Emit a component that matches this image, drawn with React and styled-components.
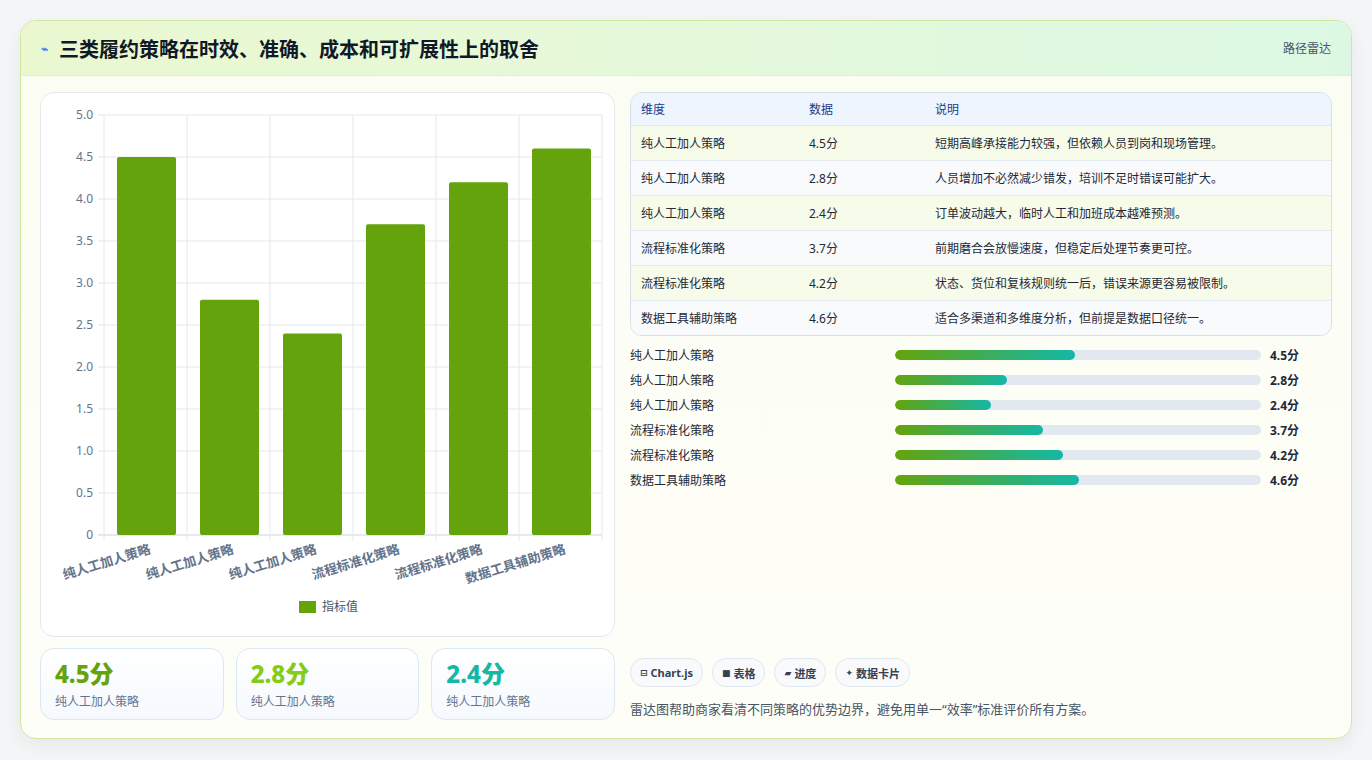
import React from 'react';
import styled, { createGlobalStyle } from 'styled-components';

const GlobalStyle = createGlobalStyle`
  body {
    margin: 0;
    background: #f4f5f7;
    font-family: "Noto Sans", "Noto Sans CJK SC", sans-serif;
  }
`;

const rows = [
  { name: '纯人工加人策略', value: 4.5, note: '短期高峰承接能力较强，但依赖人员到岗和现场管理。' },
  { name: '纯人工加人策略', value: 2.8, note: '人员增加不必然减少错发，培训不足时错误可能扩大。' },
  { name: '纯人工加人策略', value: 2.4, note: '订单波动越大，临时人工和加班成本越难预测。' },
  { name: '流程标准化策略', value: 3.7, note: '前期磨合会放慢速度，但稳定后处理节奏更可控。' },
  { name: '流程标准化策略', value: 4.2, note: '状态、货位和复核规则统一后，错误来源更容易被限制。' },
  { name: '数据工具辅助策略', value: 4.6, note: '适合多渠道和多维度分析，但前提是数据口径统一。' },
];

const Page = styled.div`
  padding: 20px;
`;

const Card = styled.div`
  border: 1px solid #cfe8a0;
  border-radius: 16px;
  background: linear-gradient(180deg, #fbfdf2 0%, #fefef8 100%);
  box-shadow: 0 6px 18px rgba(0, 0, 0, 0.06);
  overflow: hidden;
`;

const Header = styled.div`
  height: 54px;
  padding: 0 20px;
  display: flex;
  align-items: center;
  justify-content: space-between;
  background: linear-gradient(90deg, #eaf8d0 0%, #e4f9dc 60%, #dcf8e4 100%);
  border-bottom: 1px solid #e2ecd6;
`;

const Title = styled.h1`
  margin: 0;
  font-size: 20px;
  font-weight: 700;
  color: #111827;
  display: flex;
  align-items: center;
  gap: 11px;
`;

const Bolt = styled.span`
  font-size: 12px;
  color: #3b82f6;
`;

const HeaderTag = styled.span`
  font-size: 12px;
  color: #475569;
`;

const Body = styled.div`
  display: grid;
  grid-template-columns: 575px 1fr;
  gap: 15px;
  padding: 16px 19px 18px 19px;
`;

const LeftCol = styled.div`
  display: flex;
  flex-direction: column;
  gap: 11px;
`;

const ChartCard = styled.div`
  height: 543px;
  background: #fff;
  border: 1px solid #e2e8f0;
  border-radius: 14px;
`;

const Stats = styled.div`
  display: grid;
  grid-template-columns: repeat(3, 1fr);
  gap: 12px;
`;

const Stat = styled.div`
  height: 72px;
  box-sizing: border-box;
  padding: 10px 14px;
  border: 1px solid #dbe7f3;
  border-radius: 14px;
  background: linear-gradient(180deg, #ffffff, #f5f9fe);
`;

const StatValue = styled.div`
  font-size: 24px;
  font-weight: 800;
  line-height: 30px;
  color: ${p => p.$color};
`;

const StatLabel = styled.div`
  font-size: 12px;
  color: #64748b;
  margin-top: 3px;
`;

const RightCol = styled.div`
  display: flex;
  flex-direction: column;
`;

const Table = styled.div`
  border: 1px solid #d6dee8;
  border-radius: 12px;
  overflow: hidden;
  background: #fff;
  font-size: 12px;
`;

const TRow = styled.div`
  display: grid;
  grid-template-columns: 168px 126px 1fr;
  height: ${p => (p.$head ? '32px' : '34px')};
  align-items: center;
  padding-left: 10px;
  background: ${p => (p.$head ? '#eef5fe' : p.$odd ? '#f6fbea' : '#f8fafc')};
  color: ${p => (p.$head ? '#1e3a8a' : '#1f2937')};
  border-top: ${p => (p.$head ? 'none' : '1px solid #e2e8f0')};
`;

const Bars = styled.div`
  margin-top: 10px;
  display: flex;
  flex-direction: column;
  gap: 9px;
`;

const BarRow = styled.div`
  display: grid;
  grid-template-columns: 265px 366px 1fr;
  align-items: center;
  height: 16px;
  font-size: 12px;
  color: #1f2937;
`;

const Track = styled.div`
  height: 10px;
  border-radius: 5px;
  background: #e2e8f0;
  overflow: hidden;
`;

const Fill = styled.div`
  height: 100%;
  border-radius: 5px;
  background: linear-gradient(90deg, #65a30d, #14b8a6);
`;

const BarValue = styled.span`
  margin-left: 9px;
  font-weight: 700;
  color: #1e293b;
`;

const Footer = styled.div`
  margin-top: auto;
`;

const Chips = styled.div`
  display: flex;
  gap: 9px;
`;

const Chip = styled.span`
  height: 27px;
  padding: 0 9px;
  display: inline-flex;
  align-items: center;
  gap: 3px;
  border: 1px solid #e2e8f0;
  border-radius: 14px;
  background: #f8fafc;
  font-size: 11px;
  font-weight: 700;
  color: #334155;
`;

const ChipIcon = styled.span`
  font-size: 9px;
  color: #334155;
  font-family: "DejaVu Sans", sans-serif;
`;

const Note = styled.p`
  margin: 12px 0 2px;
  font-size: 13px;
  color: #475569;
`;

const BarChart = () => {
  const x0 = 63, x1 = 561, y0 = 22, y1 = 442;
  const unit = (y1 - y0) / 5;
  const slot = (x1 - x0) / 6;
  const ticks = [0, 0.5, 1, 1.5, 2, 2.5, 3, 3.5, 4, 4.5, 5];
  return (
    <svg width="575" height="543" fontFamily="'Noto Sans', 'Noto Sans CJK SC', sans-serif">
      {ticks.map(t => (
        <g key={t}>
          <line x1={x0 - 6} x2={x1} y1={y1 - t * unit} y2={y1 - t * unit} stroke={t === 0 ? '#cbd5e1' : '#e5e7eb'} />
          <text x={x0 - 11} y={y1 - t * unit + 4} textAnchor="end" fontSize="12" fill="#64748b">
            {t === 0 ? '0' : t.toFixed(1)}
          </text>
        </g>
      ))}
      {[0, 1, 2, 3, 4, 5, 6].map(i => (
        <line key={i} x1={x0 + i * slot} x2={x0 + i * slot} y1={y0} y2={y1 + 6} stroke="#e5e7eb" />
      ))}
      {rows.map((r, i) => (
        <rect key={i} x={x0 + i * slot + 13} y={y1 - r.value * unit} width={slot - 24} height={r.value * unit} fill="#65a30d" rx="2" />
      ))}
      {rows.map((r, i) => {
        const cx = x0 + i * slot + slot / 2 + 6;
        return (
          <text key={i} x={cx} y={y1 + 18} textAnchor="end" fontSize="13" fontWeight="600" fill="#64748b" transform={`rotate(-17 ${cx} ${y1 + 18})`}>
            {r.name}
          </text>
        );
      })}
      <rect x="258" y="508" width="17" height="12" fill="#65a30d" />
      <text x="281" y="518" fontSize="12" fill="#475569">指标值</text>
    </svg>
  );
};

const statColors = ['#65a30d', '#84cc16', '#14b8a6'];

export default function App() {
  return (
    <Page>
      <GlobalStyle />
      <Card>
        <Header>
          <Title><Bolt>⌁</Bolt>三类履约策略在时效、准确、成本和可扩展性上的取舍</Title>
          <HeaderTag>路径雷达</HeaderTag>
        </Header>
        <Body>
          <LeftCol>
            <ChartCard>
              <BarChart />
            </ChartCard>
            <Stats>
              {rows.slice(0, 3).map((r, i) => (
                <Stat key={i}>
                  <StatValue $color={statColors[i]}>{r.value}分</StatValue>
                  <StatLabel>{r.name}</StatLabel>
                </Stat>
              ))}
            </Stats>
          </LeftCol>
          <RightCol>
            <Table>
              <TRow $head><span>维度</span><span>数据</span><span>说明</span></TRow>
              {rows.map((r, i) => (
                <TRow key={i} $odd={i % 2 === 0}>
                  <span>{r.name}</span><span>{r.value}分</span><span>{r.note}</span>
                </TRow>
              ))}
            </Table>
            <Bars>
              {rows.map((r, i) => (
                <BarRow key={i}>
                  <span>{r.name}</span>
                  <Track><Fill style={{ width: `${r.value * 10.9}%` }} /></Track>
                  <BarValue>{r.value}分</BarValue>
                </BarRow>
              ))}
            </Bars>
            <Footer>
              <Chips>
                <Chip><ChipIcon>⊟</ChipIcon>Chart.js</Chip>
                <Chip><ChipIcon>■</ChipIcon>表格</Chip>
                <Chip><ChipIcon>▰</ChipIcon>进度</Chip>
                <Chip><ChipIcon>✦</ChipIcon>数据卡片</Chip>
              </Chips>
              <Note>雷达图帮助商家看清不同策略的优势边界，避免用单一“效率”标准评价所有方案。</Note>
            </Footer>
          </RightCol>
        </Body>
      </Card>
    </Page>
  );
}
